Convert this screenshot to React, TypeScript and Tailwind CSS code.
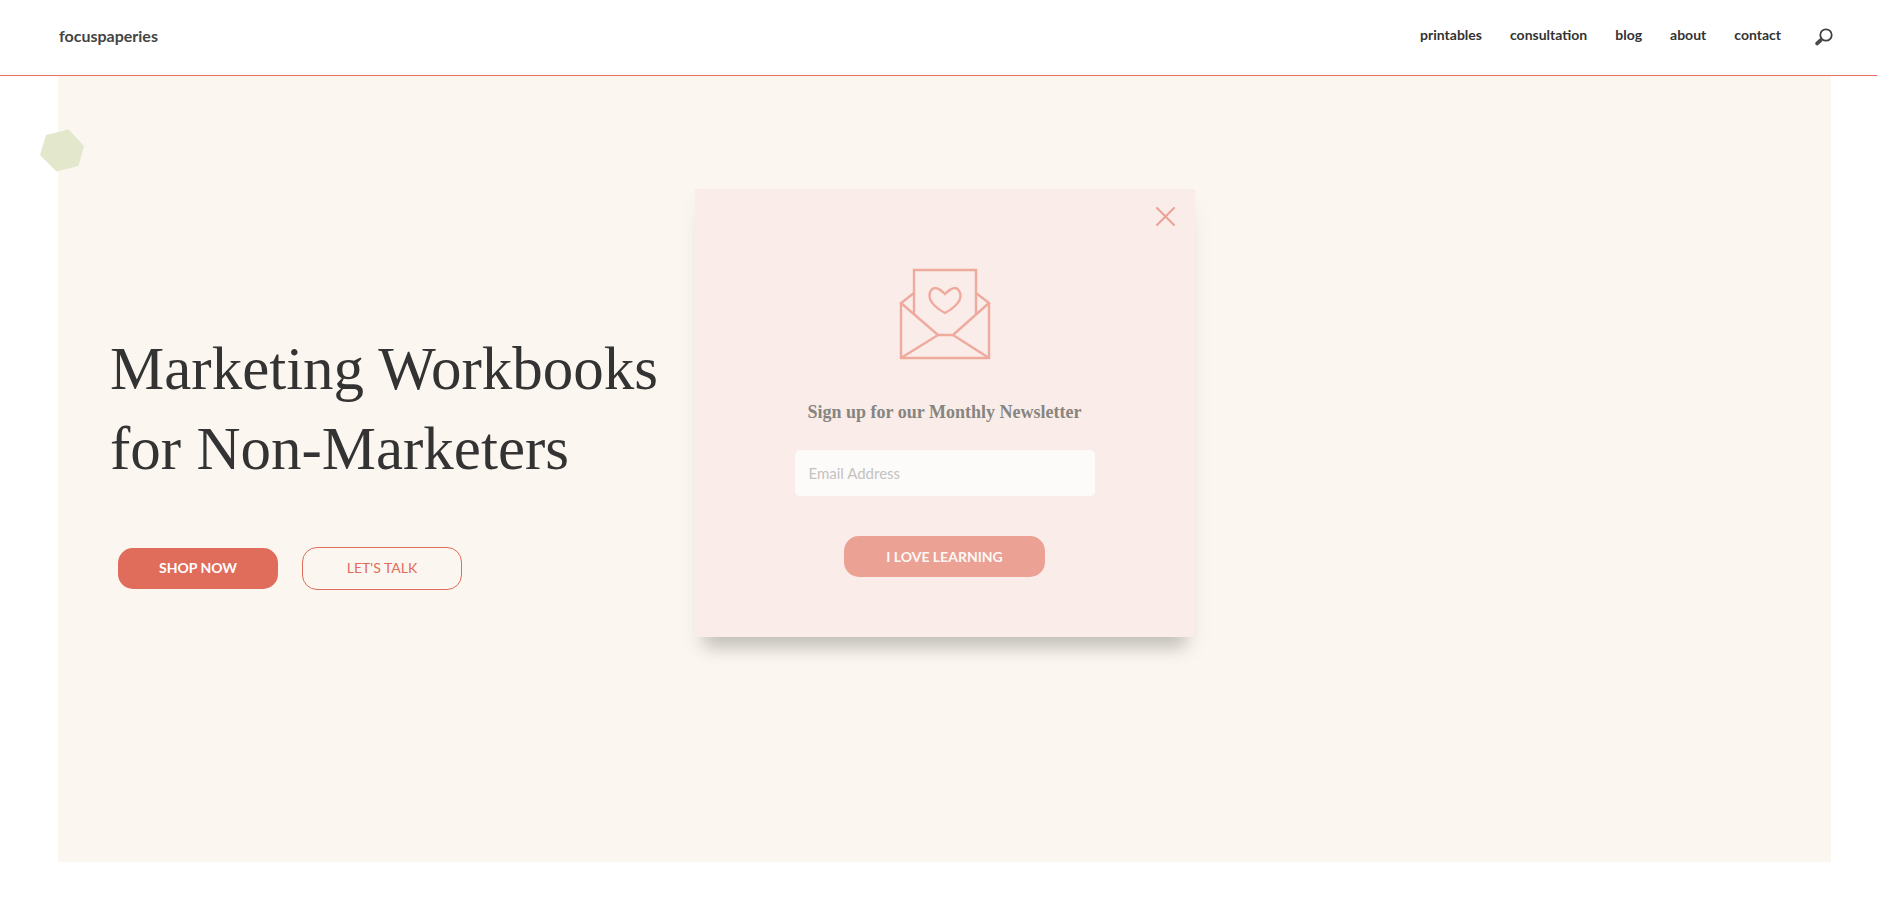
const navLinks = ["printables", "consultation", "blog", "about", "contact"];

function SearchIcon() {
  return (
    <svg className="h-[18px] w-[18px]" viewBox="0 0 18 18" fill="none" aria-hidden="true">
      <circle cx="11" cy="7" r="5.7" stroke="#404040" strokeWidth="1.8" />
      <path d="M6.6 11 L5.4 12.2" stroke="#404040" strokeWidth="2" />
      <path d="M5.500 12.300 L2.200 15.400" stroke="#4a4a4a" strokeWidth="3.8" strokeLinecap="round" />
    </svg>
  );
}

function EnvelopeIcon() {
  return (
    <svg
      className="h-[93px] w-[92px]"
      viewBox="0 0 92 93"
      fill="none"
      stroke="#efaa9e"
      strokeWidth="2.4"
      aria-hidden="true"
    >
      <path d="M2 36 V91 H90 V36" />
      <path d="M15 47 V3 H77 V47" />
      <path d="M15 26 L2 36 L39 68 H54 L90 36 L77 26" />
      <path d="M39 68 L2 91 M54 68 L90 91" />
      <path d="M46 27 C41 22 38 21 36 21 C32.500 21 30.500 25 30.500 29 C30.500 35 38 42 46 46 C54 42 61.500 35 61.500 29 C61.500 25 59 21 56 21 C54 21 51 22 46 27 Z" />
    </svg>
  );
}

function Header() {
  return (
    <header className="flex h-[76px] items-center justify-between border-b border-[#e66f60] bg-white pr-11 pb-1 pl-[59px]">
      <a href="#" className="text-base font-bold text-[#444444]">
        focuspaperies
      </a>
      <nav className="flex items-center gap-7 pb-0.5 text-sm font-bold text-[#333333]">
        {navLinks.map((link) => (
          <a key={link} href={`#${link}`}>
            {link}
          </a>
        ))}
        <button type="button" aria-label="Search" className="mt-1 ml-1.5">
          <SearchIcon />
        </button>
      </nav>
    </header>
  );
}

function NewsletterPopup() {
  return (
    <div
      role="dialog"
      aria-labelledby="newsletter-title"
      className="relative flex h-[448px] w-[500px] flex-col items-center bg-[#faece9] pt-[78px] shadow-[0_12px_24px_rgba(0,0,0,0.04),0_20px_16px_-10px_rgba(0,0,0,0.2)]"
    >
      <button type="button" aria-label="Close" className="absolute top-[18px] right-5">
        <svg className="h-[19px] w-[19px]" viewBox="0 0 19 19" stroke="#eba294" strokeWidth="2" aria-hidden="true">
          <path d="M1 1 L18 18 M18 1 L1 18" strokeLinecap="round" />
        </svg>
      </button>
      <EnvelopeIcon />
      <h2
        id="newsletter-title"
        className="mt-[38px] font-['Liberation_Serif',serif] text-lg font-bold text-[#868580]"
      >
        Sign up for our Monthly Newsletter
      </h2>
      <form className="mt-6 flex w-full flex-col items-center">
        <input
          type="email"
          aria-label="Email Address"
          placeholder="Email Address"
          className="h-[46px] w-[300px] rounded-[5px] bg-[#fdfbfa] px-3.5 text-[15px] placeholder:text-[#c3c2c0]"
        />
        <button
          type="button"
          className="mt-10 h-[41px] w-[201px] rounded-[15px] bg-[#eba294] text-sm font-bold text-[#fdf8f6]"
        >
          I LOVE LEARNING
        </button>
      </form>
    </div>
  );
}

export default function App() {
  return (
    <main className="min-h-screen bg-white font-[Lato,sans-serif]">
      <Header />
      <section className="relative mr-[46px] ml-[58px] flex min-h-[calc(100vh-130px)] flex-col justify-center bg-[#fbf6ef] px-[52px] pb-5">
        <svg className="absolute top-[52px] left-[-19px] h-[46px] w-[46px]" viewBox="0 0 46 46" aria-hidden="true">
          <path d="M7 7 L29.500 1.500 L45 18 L39.500 38 L17.500 43.500 L1 27 Z" fill="#e3e7cc" />
        </svg>
        <h1 className="font-['Liberation_Serif',serif] text-[61px] leading-[80px] text-[#333333]">
          Marketing Workbooks
          <br />
          for Non-Marketers
        </h1>
        <div className="mt-[58px] flex items-center gap-6 pl-2 text-sm">
          <button type="button" className="h-[41px] w-40 rounded-[15px] bg-[#e06c5b] font-bold text-white">
            SHOP NOW
          </button>
          <button type="button" className="h-[43px] w-40 rounded-[15px] border border-[#e06c5b] text-[#e06c5b]">
            LET'S TALK
          </button>
        </div>
        <div className="absolute inset-x-0 top-[113px] flex justify-center">
          <NewsletterPopup />
        </div>
      </section>
    </main>
  );
}
